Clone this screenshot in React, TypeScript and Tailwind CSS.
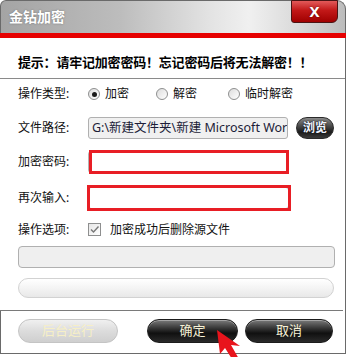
import type { ReactNode } from 'react';

const FONT = { fontFamily: '"Noto Sans", "Noto Sans CJK SC", sans-serif' };

function Radio({ checked, label, width }: { checked?: boolean; label: string; width: string }) {
  return (
    <div className={`flex items-center gap-[3px] ${width}`}>
      <span className="flex h-[12px] w-[12px] items-center justify-center rounded-full border border-[#8e8f8f] bg-[linear-gradient(135deg,#dcdcdc,#ffffff)]">
        {checked && <span className="h-[5px] w-[5px] rounded-full bg-[#1a1a1a]" />}
      </span>
      <span className="pl-[2px]">{label}</span>
    </div>
  );
}

function Row({ label, h, children }: { label: string; h: string; children?: ReactNode }) {
  return (
    <div className={`flex items-center ${h}`}>
      <span className="w-[70px] shrink-0">{label}</span>
      {children}
    </div>
  );
}

function DarkButton({ label, width }: { label: string; width: string }) {
  return (
    <button
      type="button"
      className={`${width} h-[24px] rounded-full border border-[#1c1c1c] bg-[linear-gradient(180deg,#7a7a7a_0%,#3a3a3a_35%,#101010_60%,#2a2a2a_100%)] text-[13px] text-[#f6f1d6] shadow-[inset_0_1px_0_rgba(255,255,255,0.35)]`}
    >
      {label}
    </button>
  );
}

function PasswordBox({ outer }: { outer: string }) {
  return (
    <div className="relative h-[22px] w-[201px] rounded-[3px] border border-[#b4b4b4] bg-white">
      <div className={`absolute border-[3px] border-[#e81e25] ${outer}`} />
    </div>
  );
}

export default function App() {
  return (
    <div className="relative h-[357px] w-[348px] overflow-hidden bg-white text-[12px] text-[#111]" style={FONT}>
      {/* 타이틀 바 */}
      <div className="relative h-[33px] w-[346px] rounded-tl-[6px] rounded-tr-[9px] border-l border-r border-t border-[#6a6a6a] bg-[linear-gradient(90deg,#a4a4a4_0%,#bdbdbd_35%,#e2e2e2_60%,#f0f0f0_72%,#dadada_86%,#bcbcbc_100%)]">
        <span className="absolute left-[8px] top-[7px] text-[14px] font-bold leading-[18px] text-white [text-shadow:0_0_2px_rgba(0,0,0,0.35)]">
          金钻加密
        </span>
        <div className="absolute right-[7px] top-[-1px] flex h-[23px] w-[47px] items-center justify-center rounded-b-[3px] rounded-br-[6px] border border-[#4a1414] bg-[linear-gradient(180deg,#e25a5a_0%,#c21818_45%,#a00000_100%)] text-[15px] font-bold leading-none text-white [text-shadow:0_0_2px_rgba(0,0,0,0.5)]">
          X
        </div>
      </div>
      <div className="h-[5px] w-[346px] bg-[#e60000]" />

      <div className="w-[346px] border-r border-[#6a6a6a]">
        {/* 경고 */}
        <div className="h-[41px] border-b border-[#8a8a8a] pl-[18px] pt-[15px] text-[13px] font-bold leading-[18px] tracking-[-0.2px] text-black">
          提示：请牢记加密密码！忘记密码后将无法解密！！
        </div>

        <div className="pl-[18px] pr-[11px]">
          <Row label="操作类型:" h="h-[30px]">
            <Radio checked label="加密" width="w-[68px]" />
            <Radio label="解密" width="w-[72px]" />
            <Radio label="临时解密" width="w-[80px]" />
          </Row>

          <Row label="文件路径:" h="h-[38px]">
            <div className="h-[22px] w-[201px] overflow-hidden whitespace-nowrap rounded-[3px] border border-[#b0b0b0] bg-[#f0f0f0] pl-[3px] text-[12.5px] leading-[20px] text-[#1c1c38]">
              G:\新建文件夹\新建 Microsoft Wor
            </div>
            <button
              type="button"
              className="ml-[8px] h-[22px] w-[38px] rounded-full border border-[#2a2a2a] bg-[linear-gradient(180deg,#8a8a8a_0%,#4a4a4a_40%,#1c1c1c_70%,#3a3a3a_100%)] text-[12px] font-bold text-[#eef4ff] [text-shadow:0_0_2px_#000]"
            >
              浏览
            </button>
          </Row>

          <Row label="加密密码:" h="h-[30px]">
            <PasswordBox outer="left-[0px] top-[-2px] h-[24px] w-[200px]" />
          </Row>

          <Row label="再次输入:" h="h-[42px]">
            <PasswordBox outer="left-[-2px] top-[-3px] h-[26px] w-[204px]" />
          </Row>

          <Row label="操作选项:" h="h-[21px]">
            <span className="flex h-[13px] w-[13px] items-center justify-center border border-[#8e8f8f] bg-[linear-gradient(135deg,#e6e6e6,#ffffff)]">
              <svg width="11" height="11" viewBox="0 0 11 11">
                <path d="M2 5.5 L4.5 8 L9.5 2.5" fill="none" stroke="#777" strokeWidth="1.4" />
              </svg>
            </span>
            <span className="pl-[9px]">加密成功后删除源文件</span>
          </Row>

          {/* 진행 바 */}
          <div className="mt-[6px] h-[22px] w-[317px] rounded-[4px] border border-[#b0b0b0] bg-[#efefef]" />
          <div className="mt-[10px] h-[20px] w-[316px] rounded-full border border-[#d2d2d2] bg-[linear-gradient(180deg,#ffffff_0%,#f4f4f4_50%,#e8e8e8_100%)]" />
        </div>

        <div className="mt-[12px] h-px w-[343px] bg-[#7a7a7a]" />

        {/* 하단 버튼 */}
        <div className="flex h-[43px] items-start border-b border-l border-[#6a6a6a] pl-[17px] pt-[8px]">
          <button
            type="button"
            className="h-[24px] w-[100px] rounded-full border border-[#c4c4c4] bg-[linear-gradient(180deg,#f0f0f0_0%,#dcdcdc_50%,#cfcfcf_100%)] text-[13px] text-[#f6efc6]"
          >
            后台运行
          </button>
          <div className="ml-[29px]">
            <DarkButton label="确定" width="w-[91px]" />
          </div>
          <div className="ml-[7px]">
            <DarkButton label="取消" width="w-[88px]" />
          </div>
        </div>
      </div>

      {/* 빨간 화살표 */}
      <svg className="absolute left-[210px] top-[325px]" width="38" height="34" viewBox="0 0 38 34">
        <polygon points="7,5 10,29 15,23 22,34 29,34 21,20 30,21" fill="#e8141c" />
      </svg>
    </div>
  );
}
